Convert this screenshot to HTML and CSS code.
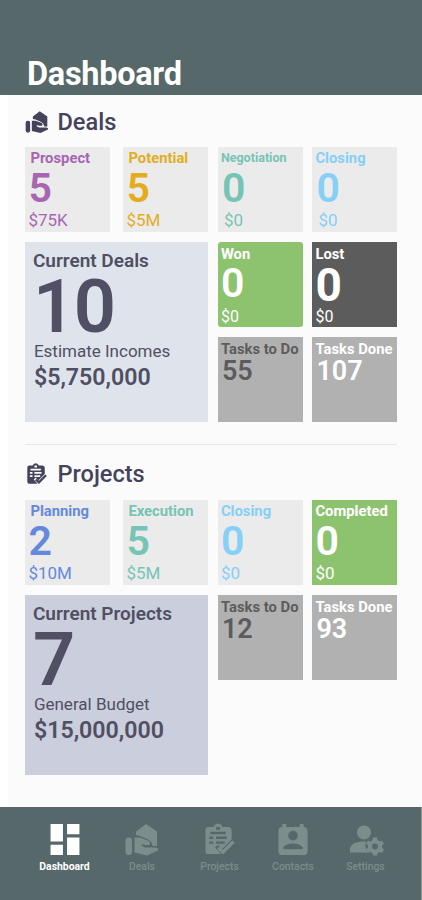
FILE: index.html
```html
<!DOCTYPE html>
<html lang="en">
	<head>
		<meta charset="UTF-8" />
		<meta name="viewport" content="width=device-width, initial-scale=1.0" />
		<title>Dashboard</title>
		<link rel="stylesheet" href="styles.css">
	</head>
	<body>
		<!-- Shared icons -->
		<svg class="icon-defs">
			<symbol id="icon-deals" viewBox="0 0 34 32">
				<rect x="0.5" y="14" width="6.500" height="17.500" rx="3" />
				<path d="M11 11.500V8L21 0.500L32 8V22.500H27.500Q27 18 23 16L15 12.500Z" />
				<path d="M9.500 14H15L24 17.500Q26 19.500 24.500 21.500H20L17 20.500L16.500 22L20 24H31Q34 25 33 27L22 32L9.500 29Z" />
			</symbol>
			<symbol id="icon-projects" viewBox="0 0 32 34">
				<path fill-rule="evenodd" d="M4 4H9Q14 -3 19 4H24Q28 4 28 8V17L18 27L14 22.500L11 25.500L17 32H4Q1 32 1 29V7Q1 4 4 4ZM12 4V7H16V4ZM6 9V11.500H22V9ZM5 14V16.500H9V14ZM12 14V16.500H23V14ZM5 19V21.500H9V19ZM12 19V21.500H21V19Z" />
				<path class="check" d="M14 25.500L19 30L30 19" />
			</symbol>
		</svg>

		<header class="header">
			<h1>Dashboard</h1>
		</header>

		<main class="content">
			<section class="section deals">
				<h2>
					<svg class="heading-icon"><use href="#icon-deals" /></svg>
					Deals
				</h2>
				<div class="board">
					<div class="pair">
						<div class="tile purple">
							<span class="label">Prospect</span>
							<span class="value">5</span>
							<span class="amount">$75K</span>
						</div>
						<div class="tile yellow">
							<span class="label">Potential</span>
							<span class="value">5</span>
							<span class="amount">$5M</span>
						</div>
					</div>
					<div class="tile teal right inset">
						<span class="label small">Negotiation</span>
						<span class="value">0</span>
						<span class="amount">$0</span>
					</div>
					<div class="tile sky right inset">
						<span class="label">Closing</span>
						<span class="value">0</span>
						<span class="amount">$0</span>
					</div>
					<div class="summary">
						<span class="title">Current Deals</span>
						<span class="total">10</span>
						<span class="caption">Estimate Incomes</span>
						<span class="money">$5,750,000</span>
					</div>
					<div class="tile green rounded right low">
						<span class="label">Won</span>
						<span class="value">0</span>
						<span class="amount">$0</span>
					</div>
					<div class="tile dark right low">
						<span class="label">Lost</span>
						<span class="value large">0</span>
						<span class="amount">$0</span>
					</div>
					<div class="tile tasks right">
						<span class="label">Tasks to Do</span>
						<span class="count">55</span>
					</div>
					<div class="tile tasks done right">
						<span class="label">Tasks Done</span>
						<span class="count">107</span>
					</div>
				</div>
			</section>

			<section class="section projects">
				<h2>
					<svg class="heading-icon"><use href="#icon-projects" /></svg>
					Projects
				</h2>
				<div class="board">
					<div class="pair">
						<div class="tile blue">
							<span class="label">Planning</span>
							<span class="value">2</span>
							<span class="amount">$10M</span>
						</div>
						<div class="tile teal">
							<span class="label">Execution</span>
							<span class="value">5</span>
							<span class="amount">$5M</span>
						</div>
					</div>
					<div class="tile sky right">
						<span class="label">Closing</span>
						<span class="value">0</span>
						<span class="amount">$0</span>
					</div>
					<div class="tile green right">
						<span class="label">Completed</span>
						<span class="value">0</span>
						<span class="amount">$0</span>
					</div>
					<div class="summary lavender">
						<span class="title">Current Projects</span>
						<span class="total">7</span>
						<span class="caption">General Budget</span>
						<span class="money">$15,000,000</span>
					</div>
					<div class="tile tasks right">
						<span class="label">Tasks to Do</span>
						<span class="count">12</span>
					</div>
					<div class="tile tasks done right">
						<span class="label">Tasks Done</span>
						<span class="count">93</span>
					</div>
				</div>
			</section>
		</main>

		<nav class="navbar">
			<a class="active">
				<svg viewBox="0 0 32 32"><path d="M2 1H14V18H2ZM18 1H30V11H18ZM18 14H30V31H18ZM2 21H14V31H2Z" /></svg>
				Dashboard
			</a>
			<a>
				<svg><use href="#icon-deals" /></svg>
				Deals
			</a>
			<a>
				<svg><use href="#icon-projects" /></svg>
				Projects
			</a>
			<a>
				<svg viewBox="0 0 32 34"><path fill-rule="evenodd" d="M5 1H9V4H23V1H27V4Q31 4 31 8V29Q31 33 27 33H5Q1 33 1 29V8Q1 4 5 4ZM16 8A5 5 0 0 0 16 18A5 5 0 0 0 16 8ZM6 27H26V25Q23 21 16 21Q9 21 6 25Z" /></svg>
				Contacts
			</a>
			<a>
				<svg viewBox="0 0 34 32">
					<circle cx="15" cy="9" r="7" />
					<path d="M1 29V25Q2 18 15 18H17Q15 24 19 29Z" />
					<path fill-rule="evenodd" d="M24 14H28L28.500 16.500L31 18L33 17L35 20.500L33 22L33 24L35 26L33 29.500L30.500 28.500L28.500 30L28 32H24L23.500 30L21.500 28.500L19 29.500L17 26L19 24V22L17 20L19 17L21.500 18L23.500 16.500ZM26 20A3 3 0 0 0 26 26A3 3 0 0 0 26 20Z" />
				</svg>
				Settings
			</a>
		</nav>
	</body>
</html>
```

FILE: styles.css
```css
* {
	box-sizing: border-box;
}

body {
	font-family: Roboto, Arial, sans-serif;
	background-color: #ffffff;
	margin: 0;
	height: 900px;
	display: flex;
	flex-direction: column;
}

.icon-defs {
	display: none;
}

.header {
	background-color: #56686a;
	height: 95px;
	padding: 54px 27px 0;
}

.header h1 {
	color: #ffffff;
	font-size: 32.5px;
	line-height: 41px;
	letter-spacing: -0.3px;
	margin: 0;
}

.content {
	flex: 1;
	margin-left: 8px;
	padding: 0 24.6px 0 17.4px;
	background-color: #fbfbfc;
}

.section h2 {
	display: flex;
	align-items: center;
	gap: 8px;
	height: 52px;
	margin: 0;
	color: #45435c;
	font-size: 23.6px;
	font-weight: 500;
	line-height: 30px;
	padding-top: 2px;
}

.projects {
	border-top: 1px solid #e6e6e8;
	margin-top: 22px;
}

.projects h2 {
	height: 55px;
	padding-top: 2px;
}

.heading-icon {
	width: 24px;
	height: 22px;
	fill: #45435c;
	color: #45435c;
}

.check {
	fill: none;
	stroke: currentColor;
	stroke-width: 3.5;
}

/* Tile board */
.board {
	display: grid;
	grid-template-columns: 183px 85px 85px;
	grid-auto-rows: 85px;
	column-gap: 9.5px;
	row-gap: 10px;
}

.pair {
	display: flex;
	justify-content: space-between;
}

.tile {
	display: flex;
	flex-direction: column;
	width: 85px;
	background-color: #ebebeb;
	white-space: nowrap;
}

.label {
	padding-left: 5px;
	font-size: 14.8px;
	font-weight: 700;
	line-height: 22px;
}

.value {
	padding-left: 3px;
	font-size: 41px;
	font-weight: 600;
	line-height: 38px;
}

.amount {
	padding-left: 3px;
	font-size: 17px;
	line-height: 26px;
}

.right .label {
	padding-left: 3px;
}

.inset .value {
	padding-left: 4px;
}

.inset .amount {
	padding-left: 6px;
}

.tile .label.small {
	font-size: 12.5px;
}

.low .label {
	line-height: 24px;
}

.low .value {
	line-height: 34px;
}

.low .amount {
	line-height: 33px;
	font-size: 16px;
}

.low .value.large {
	font-size: 46px;
	font-weight: 700;
	line-height: 38px;
}

.low .value.large + .amount {
	line-height: 25px;
}

.purple { color: #a765b2; }
.yellow { color: #e3ad1f; }
.teal { color: #76c4b5; }
.sky { color: #86cff7; }
.blue { color: #6489dc; }

.green {
	background-color: #8dc26f;
	color: #ffffff;
}

.rounded {
	border-radius: 3px;
}

.dark {
	background-color: #5c5c5c;
	color: #ffffff;
}

.tasks {
	background-color: #b1b1b1;
	color: #5c5c5c;
}

.tasks .label {
	line-height: 24px;
}

.done {
	color: #ffffff;
}

.count {
	padding-left: 4px;
	font-size: 27px;
	font-weight: 600;
	line-height: 21px;
}

.summary {
	grid-row: span 2;
	display: flex;
	flex-direction: column;
	padding-left: 7.5px;
	background-color: #dfe4ec;
	color: #504f63;
}

.lavender {
	background-color: #cbcedc;
}

.title {
	font-size: 19px;
	font-weight: 600;
	line-height: 37px;
}

.total {
	font-size: 74px;
	font-weight: 600;
	line-height: 56px;
	letter-spacing: -1.5px;
}

.caption {
	padding-left: 1px;
	font-size: 17px;
	line-height: 33px;
}

.money {
	padding-left: 1px;
	font-size: 23.2px;
	font-weight: 600;
	line-height: 18px;
}

/* Bottom navigation */
.navbar {
	display: grid;
	grid-template-columns: 77px 78px 77px 70px 75px;
	height: 93px;
	padding: 16px 0 0 26px;
	background-color: #56686a;
	border-right: 1px solid #8c9a9a;
}

.navbar a {
	display: flex;
	flex-direction: column;
	align-items: center;
	color: #7c8d8c;
	font-size: 10.4px;
	font-weight: 500;
	line-height: 21px;
}

.navbar svg {
	width: 34px;
	height: 33px;
	fill: currentColor;
	overflow: visible;
}

.navbar .active {
	color: #ffffff;
	font-weight: 700;
}
```
